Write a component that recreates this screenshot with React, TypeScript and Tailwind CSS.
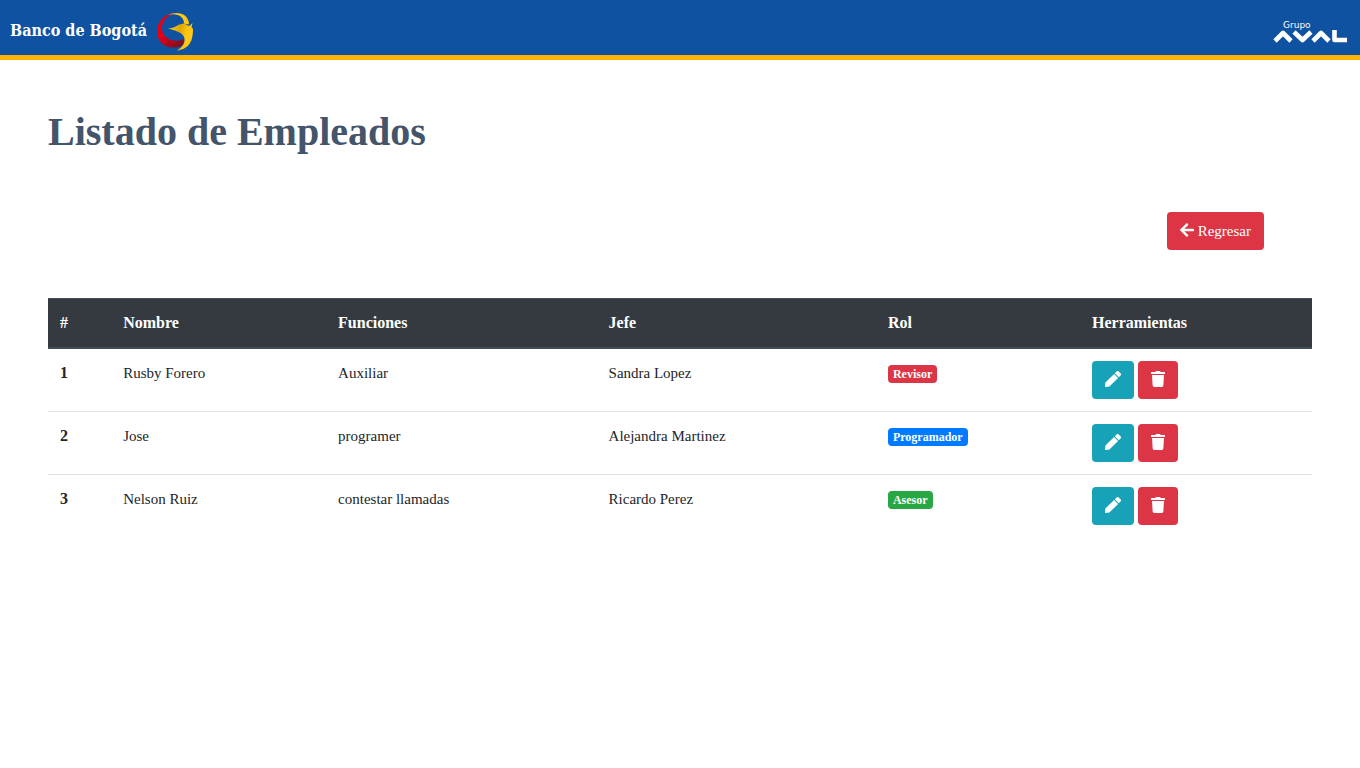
import type { ReactNode } from "react";
import { FaArrowLeft, FaPen, FaTrash } from "react-icons/fa";

type Employee = {
  id: number;
  name: string;
  duties: string;
  boss: string;
  role: string;
  badge: string;
};

const employees: Employee[] = [
  { id: 1, name: "Rusby Forero", duties: "Auxiliar", boss: "Sandra Lopez", role: "Revisor", badge: "bg-[#dc3545]" },
  { id: 2, name: "Jose", duties: "programer", boss: "Alejandra Martinez", role: "Programador", badge: "bg-[#007bff]" },
  { id: 3, name: "Nelson Ruiz", duties: "contestar llamadas", boss: "Ricardo Perez", role: "Asesor", badge: "bg-[#28a745]" },
];

function BankEmblem() {
  return (
    <svg width="37" height="40" viewBox="0 0 37 40" aria-hidden="true">
      <defs>
        <linearGradient id="red" x1="0.2" y1="0" x2="0.7" y2="1">
          <stop offset="0.55" stopColor="#e2001a" />
          <stop offset="1" stopColor="#7d1020" />
        </linearGradient>
        <linearGradient id="gold" x1="0" y1="0" x2="1" y2="0.3">
          <stop offset="0" stopColor="#ffd21e" />
          <stop offset="0.5" stopColor="#e0a400" />
          <stop offset="0.8" stopColor="#ffc814" />
        </linearGradient>
      </defs>
      <path d="M18 1C7 2 0 10 0 19.500C0 29 7 35.500 15 35.500C20 35.500 24 35 26.500 32L27 27C23 29 17 29.500 12 27C7 24.500 4.500 20 5 14.500C6 8 11 3.500 18 1Z" fill="url(#red)" />
      <path d="M11 3C20-1.500 32 1.500 32 12.500L27 11.500C27 5 21 .500 11 3Z" fill="#ffc814" />
      <path d="M11 16.500C17 17 22 11 28 11.500C29.500 13 31 14.500 33 13.500L35.500 11L34.500 15L36 17C36 28 33 37 20 38.500C26 35 29 30 27 25C25 20 18 18.500 11 16.500Z" fill="url(#gold)" />
    </svg>
  );
}

function AvalMark() {
  return (
    <svg width="75" height="14" viewBox="0 0 75 14" fill="none" stroke="#fff" strokeWidth="4.6" strokeLinejoin="round" aria-hidden="true">
      <path d="M2 12l8-8 8 8" />
      <path d="M21 3l8.500 8L38 3" />
      <path d="M40 12l8-8 8 8" />
      <path d="M61.500 1v10H74" />
    </svg>
  );
}

function Cell({ children }: { children: ReactNode }) {
  return <td className="border-t border-[#dee2e6] p-3 align-top text-[15px] leading-6">{children}</td>;
}

export default function App() {
  return (
    <div className="min-h-screen bg-white font-['Liberation_Serif',serif] text-base text-[#212529]">
      <header className="flex h-[60px] items-center justify-between border-b-[5px] border-[#ffb500] bg-[#0f52a2] pr-3 pl-2.5 text-white">
        <div className="flex items-center gap-2.5 pt-2">
          <span className="pb-0.5 font-['DejaVu_Serif_Condensed','DejaVu_Serif',serif] text-base font-bold">Banco de Bogotá</span>
          <BankEmblem />
        </div>
        <div className="flex flex-col pt-2">
          <span className="pl-2.5 font-['DejaVu_Sans',sans-serif] text-[9px] leading-2">Grupo</span>
          <AvalMark />
        </div>
      </header>

      <main className="p-12">
        <h1 className="text-[40px] leading-12 font-bold text-[#44546a]">Listado de Empleados</h1>
        <div className="flex justify-end px-12 pt-14 pb-12">
          <a href="#regresar" className="flex h-[38px] items-center gap-1 rounded bg-[#dc3545] px-[13px] text-[15px] text-white">
            <FaArrowLeft className="mb-0.5 h-4 w-3.5" aria-hidden="true" />
            Regresar
          </a>
        </div>

        <table className="w-full table-fixed border-collapse text-left">
          <colgroup>
            <col className="w-[5%]" />
            <col className="w-[17%]" />
            <col className="w-[21.4%]" />
            <col className="w-[22.1%]" />
            <col className="w-[16.15%]" />
            <col />
          </colgroup>
          <thead className="bg-[#343a40] text-white">
            <tr>
              {["#", "Nombre", "Funciones", "Jefe", "Rol", "Herramientas"].map((title) => (
                <th key={title} scope="col" className="border-t border-b-2 border-[#454d55] p-3 font-bold">{title}</th>
              ))}
            </tr>
          </thead>
          <tbody>
            {employees.map((e) => (
              <tr key={e.id}>
                <th scope="row" className="border-t border-[#dee2e6] p-3 align-top font-bold">{e.id}</th>
                <Cell>{e.name}</Cell>
                <Cell>{e.duties}</Cell>
                <Cell>{e.boss}</Cell>
                <Cell>
                  <span className={`inline-block rounded px-[5px] py-[3px] align-baseline text-xs leading-3 font-bold text-white ${e.badge}`}>{e.role}</span>
                </Cell>
                <Cell>
                  <div className="flex gap-1">
                    <button type="button" aria-label={`Editar ${e.name}`} className="flex h-[38px] items-center rounded bg-[#17a2b8] px-[13px] pb-0.5 text-white">
                      <FaPen className="size-4" />
                    </button>
                    <button type="button" aria-label={`Eliminar ${e.name}`} className="flex h-[38px] items-center rounded bg-[#dc3545] px-[13px] pb-0.5 text-white">
                      <FaTrash className="h-4 w-3.5" />
                    </button>
                  </div>
                </Cell>
              </tr>
            ))}
          </tbody>
        </table>
      </main>
    </div>
  );
}
